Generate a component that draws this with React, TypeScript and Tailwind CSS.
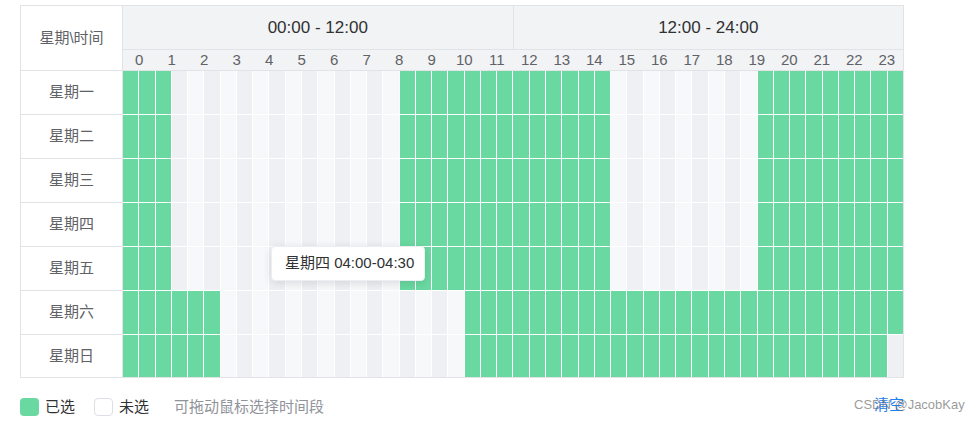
import React from "react";

const days = ["星期一", "星期二", "星期三", "星期四", "星期五", "星期六", "星期日"];
const hours = Array.from({ length: 24 }, (_, i) => i);
const slots = Array.from({ length: 48 }, (_, i) => i);

// selected half-hour ranges per day (inclusive column indexes)
const weekday = [
  [0, 2],
  [17, 29],
  [39, 47],
];
const selected: number[][][] = [
  weekday,
  weekday,
  weekday,
  weekday,
  weekday,
  [
    [0, 5],
    [21, 47],
  ],
  [
    [0, 5],
    [21, 46],
  ],
];

const isOn = (row: number, col: number) =>
  selected[row].some(([a, b]) => col >= a && col <= b);

const cellClass = (row: number, col: number) => {
  if (isOn(row, col)) return "bg-[#6ad9a1]";
  return col % 2 === 1 ? "bg-[#eff0f3]" : "bg-[#f7f8fa]";
};

const TimeRangeTable = () => {
  return (
    <div className="relative w-[884px] border border-[#e2e3e6] bg-white">
      {/* header */}
      <div className="flex">
        <div className="flex h-[65px] w-[102px] shrink-0 items-center justify-center border-r border-b border-[#e2e3e6] text-[15px] text-[#606266]">
          星期\时间
        </div>
        <div className="flex flex-1 flex-col bg-[#f2f3f5]">
          <div className="flex h-[44px] border-b border-[#e2e3e6] text-[17px] text-[#303133]">
            <div className="flex flex-1 items-center justify-center border-r border-[#e2e3e6]">00:00 - 12:00</div>
            <div className="flex flex-1 items-center justify-center">12:00 - 24:00</div>
          </div>
          <div className="grid h-[21px] grid-cols-[repeat(24,minmax(0,1fr))] border-b border-[#e2e3e6] text-[15px] leading-[20px] text-[#606266]">
            {hours.map((h) => (
              <div key={h} className="text-center">
                {h}
              </div>
            ))}
          </div>
        </div>
      </div>

      {/* rows */}
      {days.map((day, r) => {
        const last = r === days.length - 1;
        return (
          <div key={day} className={`flex ${last ? "h-[42px]" : "h-[44px]"}`}>
            <div
              className={`flex w-[102px] shrink-0 items-center justify-center border-r border-[#e2e3e6] text-[15px] text-[#606266] ${
                last ? "" : "border-b"
              }`}
            >
              {day}
            </div>
            <div
              className={`grid flex-1 grid-cols-[repeat(48,minmax(0,1fr))] gap-x-px bg-white ${
                last ? "" : "border-b border-white"
              }`}
            >
              {slots.map((c) => (
                <div key={c} className={cellClass(r, c)} />
              ))}
            </div>
          </div>
        );
      })}

      {/* hover tooltip */}
      <div className="absolute left-[250px] top-[240px] flex h-[35px] w-[154px] items-center rounded-[4px] border border-[#ebeef5] bg-white pl-[13px] text-[15px] whitespace-nowrap text-[#303133] shadow-[0_2px_10px_rgba(0,0,0,0.12)]">
        星期四 04:00-04:30
      </div>
    </div>
  );
};

export default function App() {
  return (
    <div
      className="relative h-[423px] w-[980px] bg-white pl-[20px] pt-[5px]"
      style={{ fontFamily: '"Liberation Sans", "Noto Sans CJK SC", sans-serif' }}
    >
      <TimeRangeTable />

      <div className="mt-[19px] flex w-[884px] items-center justify-between">
        <div className="flex items-center text-[15px] leading-[20px]">
          <span className="h-[18px] w-[19px] rounded-[4px] bg-[#6ad9a1]" />
          <span className="ml-[6px] text-[#303133]">已选</span>
          <span className="ml-[19px] h-[18px] w-[19px] rounded-[4px] border border-[#dcdfe6] bg-white" />
          <span className="ml-[6px] text-[#303133]">未选</span>
          <span className="ml-[25px] text-[#909399]">可拖动鼠标选择时间段</span>
        </div>
        <button type="button" className="-translate-y-[2px] text-[15px] leading-[20px] text-[#1f7ff0]">
          清空
        </button>
      </div>

      {/* blog watermark */}
      <div className="pointer-events-none absolute left-[854px] top-[396px] text-[13px] leading-[18px] text-[rgba(110,110,110,0.7)]">
        CSDN @JacobKay
      </div>
    </div>
  );
}
